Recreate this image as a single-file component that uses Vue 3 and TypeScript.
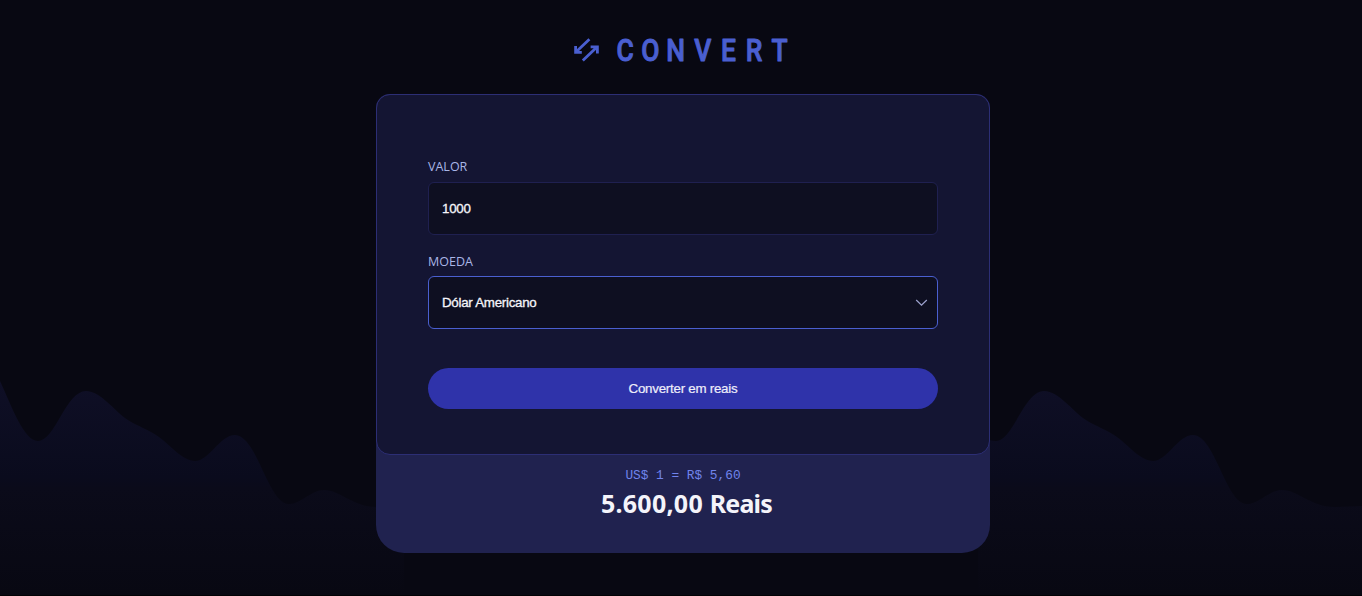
<script setup lang="ts">
import { computed, ref } from 'vue'

interface Currency {
  code: string
  symbol: string
  name: string
  rate: number
}

const currencies: Currency[] = [
  { code: 'USD', symbol: 'US$', name: 'Dólar Americano', rate: 5.6 },
]

const amount = ref('1000')
const selected = ref('USD')

const currency = computed(() => currencies.find((c) => c.code === selected.value) ?? currencies[0])

function format(value: number): string {
  const [whole, cents] = value.toFixed(2).split('.')
  return `${whole.replace(/\B(?=(\d{3})+$)/g, '.')},${cents}`
}

const description = computed(() => `${currency.value.symbol} 1 = R$ ${format(currency.value.rate)}`)
const result = computed(() => format((Number(amount.value) || 0) * currency.value.rate))
</script>

<template>
  <div class="page">
    <svg class="waves" width="1362" height="216" viewBox="0 380 1362 216" aria-hidden="true">
      <defs>
        <linearGradient id="fade" x1="0" y1="380" x2="0" y2="596" gradientUnits="userSpaceOnUse">
          <stop offset="0" stop-color="#0f0f26" />
          <stop offset="0.45" stop-color="#0a0b1d" />
          <stop offset="0.5" stop-color="#0b0b1a" />
          <stop offset="1" stop-color="#080812" />
        </linearGradient>
      </defs>
      <g fill="url(#fade)">
        <path
          d="M0 381 C12 407 24 441 38 441 C55 441 66 391 86 391 C101 391 114 411 128 420 C139 427 148 429 159 437 C171 446 183 461 195 461 C209 461 220 435 235 435 C257 435 268 504 289 504 C301 504 311 490 324 490 C341 490 352 507 377 507 L404 506 V596 H0 Z"
        />
        <path
          d="M978 434 C984 438 989 441 996 441 C1013 441 1024 391 1044 391 C1059 391 1072 411 1086 420 C1097 427 1106 429 1117 437 C1129 446 1141 461 1153 461 C1167 461 1178 435 1193 435 C1215 435 1226 504 1247 504 C1259 504 1269 490 1282 490 C1299 490 1310 507 1335 507 L1362 506 V596 H978 Z"
        />
      </g>
    </svg>

    <main class="converter">
      <header class="brand">
        <svg class="logo" width="26" height="26" viewBox="0 0 26 26" aria-hidden="true">
          <path d="M16.4 2.2 L3 15 M2.6 9 V15.4 H8.8 M9.8 23.6 L24 10 M17.6 9.8 H24.4 V16.4" />
        </svg>
        <h1>
          <svg class="wordmark" width="180" height="40" viewBox="0 0 180 40">
            <text transform="scale(0.84 1)" x="13.3 43.3 73.3 105.7 136.3 166.8 197" y="31">CONVERT</text>
          </svg>
        </h1>
      </header>

      <div class="box">
        <form class="card" @submit.prevent>
          <label for="amount">VALOR</label>
          <input id="amount" v-model="amount" type="text" class="field" />

          <label for="currency" class="second">MOEDA</label>
          <div class="select">
            <select id="currency" v-model="selected" class="field active">
              <option v-for="c in currencies" :key="c.code" :value="c.code">{{ c.name }}</option>
            </select>
            <svg class="chevron" width="13" height="8" viewBox="0 0 13 8" aria-hidden="true">
              <path d="M1.2 1 L6.5 6.2 L11.8 1" />
            </svg>
          </div>

          <button type="submit">Converter em reais</button>
        </form>
        <footer class="result">
          <span class="rate">{{ description }}</span>
          <h2>{{ result }} <span class="unit">Reais</span></h2>
        </footer>
      </div>
    </main>
  </div>
</template>

<style>
html,
body {
  background: #080812;
}
</style>

<style scoped>
* {
  box-sizing: border-box;
  margin: 0;
}

.page {
  position: relative;
  height: 596px;
  overflow: hidden;
  background: #080812;
  border-bottom: 1px solid #020205;
}

.waves {
  position: absolute;
  left: 0;
  top: 380px;
  display: block;
}

.converter {
  position: relative;
  width: 614px;
  margin-left: 376px;
  padding-top: 30px;
}

.brand {
  display: flex;
  align-items: center;
  height: 40px;
  margin-bottom: 24px;
  padding-left: 197px;
}

.logo {
  flex: none;
  margin-right: 15px;
  fill: none;
  stroke: #4a5fd0;
  stroke-width: 2.8;
}

.brand h1 {
  height: 40px;
}

.wordmark {
  display: block;
}

.wordmark text {
  fill: #4a5fd0;
  stroke: #4a5fd0;
  stroke-width: 1px;
  stroke-linejoin: round;
  font: 500 31.5px Roboto, sans-serif;
  text-anchor: middle;
}

.box {
  height: 459px;
  background: #20224f;
  border-radius: 14px 14px 28px 28px;
}

.card {
  display: flex;
  flex-direction: column;
  height: 361px;
  padding: 63px 51px 0;
  background: #141533;
  border: 1px solid #2c2e75;
  border-radius: 14px;
}

label {
  height: 18px;
  margin-bottom: 6px;
  color: #a9b5e6;
  font: 400 12.5px/18px "Open Sans", sans-serif;
}

label.second {
  margin-top: 18px;
  margin-bottom: 5px;
}

.field {
  display: block;
  width: 100%;
  height: 53px;
  padding: 0 13px;
  appearance: none;
  background: #0e0f21;
  border: 1px solid #1f2050;
  border-radius: 6px;
  outline: none;
  color: #f5f5fa;
  font: 400 13.33px/20px "Liberation Sans", Arial, sans-serif;
  letter-spacing: -0.27px;
  -webkit-text-stroke: 0.3px #f5f5fa;
}

.field.active {
  border-color: #4a5fd0;
}

.select {
  position: relative;
}

.chevron {
  position: absolute;
  right: 10px;
  top: 23px;
  fill: none;
  stroke: #9da3cf;
  stroke-width: 1.2;
}

button {
  height: 41px;
  margin-top: 39px;
  background: #2f33aa;
  border: 0;
  border-radius: 21px;
  color: #eeeefa;
  font: 400 13.33px/20px "Liberation Sans", Arial, sans-serif;
  letter-spacing: -0.25px;
  -webkit-text-stroke: 0.2px #eeeefa;
}

.result {
  display: flex;
  flex-direction: column;
  align-items: center;
  padding-top: 12px;
}

.rate {
  height: 18px;
  color: #7184ec;
  font: 400 12.8px/18px "Liberation Mono", monospace;
}

.result h2 {
  margin-top: -2px;
  padding-left: 7px;
  color: #f4f4fa;
  font: 700 25px/40px "Noto Sans", sans-serif;
  letter-spacing: 0.25px;
}

.result .unit {
  letter-spacing: -0.8px;
}
</style>
